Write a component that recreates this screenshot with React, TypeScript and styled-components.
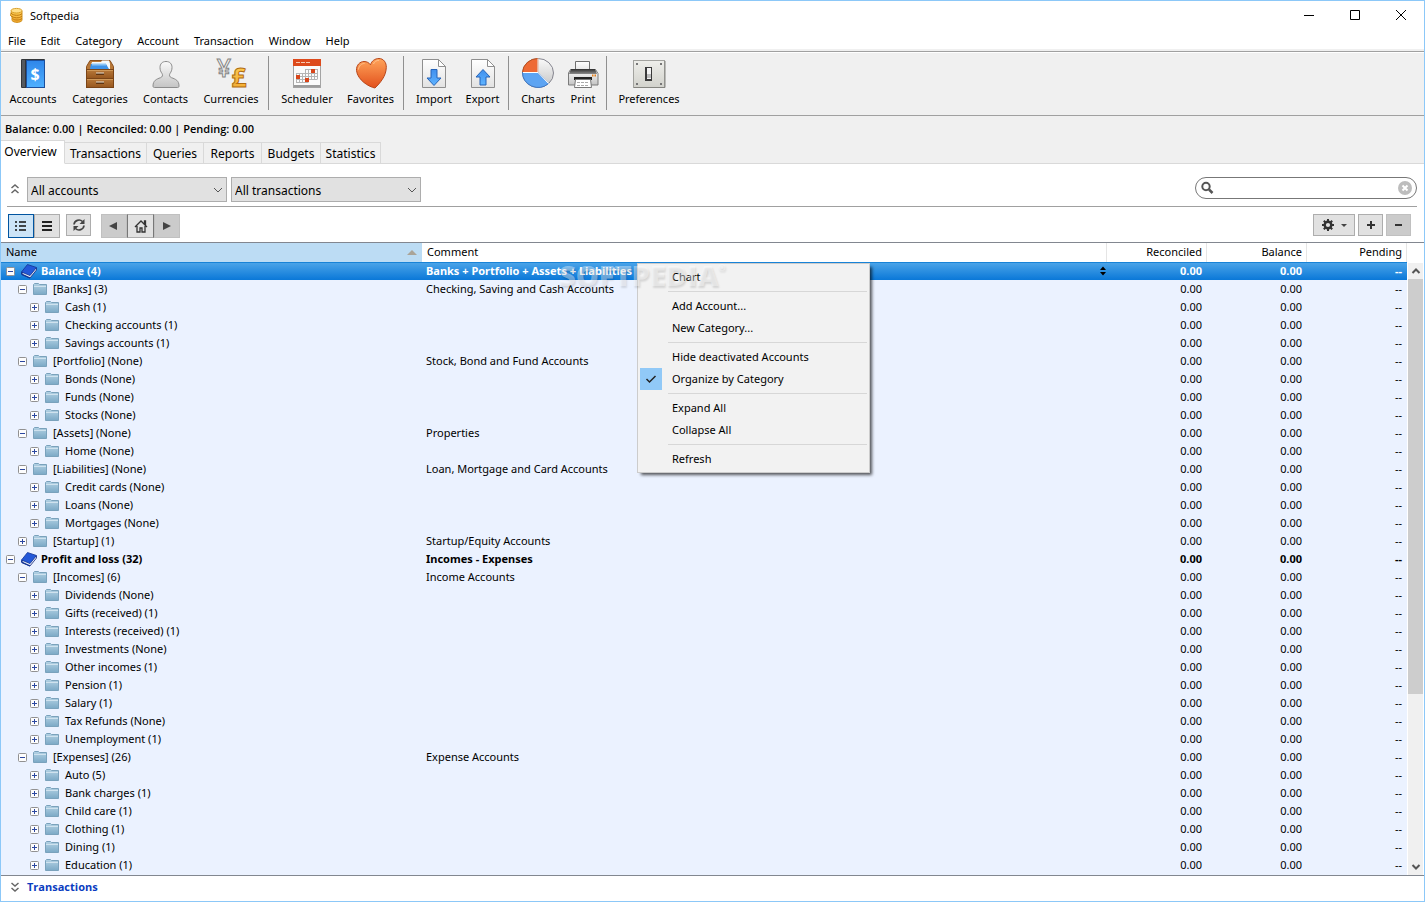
import React from 'react';
import styled, { createGlobalStyle, css } from 'styled-components';

const GlobalStyle = createGlobalStyle`
  * { box-sizing: border-box; }
  body { margin: 0; background: #fff; }
  body, button, input, select, table {
    font-family: "Noto Sans", "Open Sans", sans-serif;
    font-size: 11px;
    color: #000;
  }
  button { border: 0; padding: 0; margin: 0; background: none; }
  svg { display: block; flex: none; overflow: visible; }
`;

const Window = styled.div`
  display: flex;
  flex-direction: column;
  min-height: 100vh;
  border: 1px solid #8cc8f8;
  background: #fff;
`;

const TitleBar = styled.header`
  display: flex;
  align-items: center;
  height: 29px;
  padding: 0 13px 1px 7px;
  gap: 5px;
`;

const Title = styled.h1`
  flex: 1;
  margin: 0;
  font-size: 11px;
  font-weight: 400;
`;

const CaptionButtons = styled.div`
  display: flex;
  gap: 26px;
`;

const CaptionButton = styled.button`
  width: 20px;
  height: 20px;
  display: grid;
  place-items: center;
`;

const MenuBar = styled.nav`
  display: flex;
  gap: 15px;
  height: 21px;
  padding-left: 7px;
  border-bottom: 2px solid #f0f0f0;
`;

const MenuBarItem = styled.button`
  height: 20px;
  line-height: 22px;
`;

const ToolBar = styled.div`
  display: flex;
  height: 65px;
  padding-top: 4px;
  background: #f0f0f0;
  border-top: 1px solid #a0a0a0;
  border-bottom: 1px solid #a0a0a0;
  box-shadow: inset 0 1px #fff;
`;

const ToolGroup = styled.div`
  display: flex;
  padding-right: 2px;

  & + & {
    padding-left: 5px;
    border-left: 1px solid #909090;
    height: 54px;
  }
`;

const ToolButton = styled.button<{ $w: number }>`
  display: flex;
  flex-direction: column;
  align-items: center;
  gap: 2px;
  width: ${p => p.$w}px;
  height: 52px;
  padding-top: 1px;
  line-height: 16px;
`;

const StatusLine = styled.div`
  height: 24px;
  padding-left: 4px;
  line-height: 25px;
  font-family: "Open Sans", "Noto Sans", sans-serif;
  font-weight: 600;
  background: #f0f0f0;
`;

const TabStrip = styled.div`
  display: flex;
  align-items: flex-end;
  height: 24px;
  background: #f0f0f0;
  box-shadow: inset 0 -1px #d9d9d9;
`;

const Tab = styled.button<{ $w: number; $active?: boolean }>`
  width: ${p => p.$w}px;
  height: 22px;
  font-size: 12px;
  line-height: 22px;
  white-space: nowrap;
  border: 1px solid #d9d9d9;
  border-left: 0;
  ${p => p.$active && css`
    height: 24px;
    padding: 0 4px 2px 0;
    background: #fff;
    border-bottom-color: #fff;
  `}
`;

const FilterRow = styled.div`
  display: flex;
  align-items: flex-start;
  gap: 4px;
  margin: 0 7px 0 6px;
  padding: 13px 0 4px;
  border-bottom: 1px solid #a0a0a0;
`;

const CollapseButton = styled.button`
  width: 16px;
  height: 24px;
  display: grid;
  place-items: center;
`;

const SelectBox = styled.label<{ $w: number }>`
  display: grid;
  grid-template-columns: 1fr 13px;
  align-items: center;
  width: ${p => p.$w}px;
  height: 25px;
  background: #e1e1e1;
  border: 1px solid #adadad;
`;

const Select = styled.select`
  grid-area: 1 / 1 / 2 / 3;
  height: 23px;
  padding: 2px 3px 0;
  font-size: 12px;
  appearance: none;
  background: transparent;
  border: 0;
`;

const SelectArrow = styled.span`
  grid-area: 1 / 2;
  pointer-events: none;
`;

const SearchBox = styled.label`
  display: flex;
  align-items: center;
  gap: 4px;
  width: 222px;
  height: 22px;
  margin-left: auto;
  padding: 0 4px 0 5px;
  border: 1px solid #777;
  border-radius: 11px;
`;

const SearchInput = styled.input`
  flex: 1;
  min-width: 0;
  height: 18px;
  padding: 0;
  border: 0;
  outline: 0;
  background: transparent;
`;

const ActionRow = styled.div`
  display: flex;
  align-items: flex-start;
  padding: 7px 13px 4px 7px;
  gap: 6px;
  border-bottom: 1px solid #828790;
`;

const ButtonGroup = styled.div<{ $gap?: number; $side?: 'start' | 'end' }>`
  display: flex;
  gap: ${p => p.$gap || 0}px;
  margin-left: ${p => (p.$side === 'end' ? 'auto' : p.$side === 'start' ? '4px' : '0')};
`;

const IconButton = styled.button<{ $w?: number; $h?: number; $tone?: 'on' | 'off' | 'middle' }>`
  display: flex;
  align-items: center;
  justify-content: center;
  gap: 6px;
  width: ${p => p.$w || 26}px;
  height: ${p => p.$h || 24}px;
  background: #e1e1e1;
  border: 1px solid #adadad;
  ${p => p.$tone === 'on' && css`background: #cce4f7; border-color: #0054a0;`}
  ${p => p.$tone === 'off' && css`background: #cbcbcb; border-color: #c0c0c0;`}
  ${p => p.$tone === 'middle' && css`border-left-color: #777; border-right-color: #777;`}
`;

const ListArea = styled.main`
  position: relative;
  display: grid;
  grid-template-columns: 1fr 17px;
  flex: 1;
  background: #ebf2ff;
`;

const Table = styled.table`
  width: 100%;
  align-self: start;
  table-layout: fixed;
  border-collapse: collapse;
`;

const Col = styled.col<{ $w?: number }>`
  width: ${p => (p.$w ? `${p.$w}px` : 'auto')};
`;

const HeadCell = styled.th<{ $sorted?: boolean; $right?: boolean }>`
  height: 19px;
  padding: 0 5px 1px;
  line-height: 18px;
  font-weight: 400;
  text-align: ${p => (p.$right ? 'right' : 'left')};
  background: ${p => (p.$sorted ? '#bcdcf4' : '#fff')};
  box-shadow: inset -1px 0 ${p => (p.$sorted ? '#bcdcf4' : '#e5e5e5')};
`;

const HeadLine = styled.span`
  display: flex;
  align-items: center;
  justify-content: space-between;
  height: 18px;
`;

const Row = styled.tr<{ $bold?: boolean; $selected?: boolean }>`
  height: 18px;
  font-weight: ${p => (p.$bold ? 700 : 400)};
  ${p => p.$selected && css`
    background: linear-gradient(#1883d7 1px, #4aa3e8 1px, #0a78d8);
    td { color: #fff; }
  `}
`;

const Cell = styled.td<{ $right?: boolean }>`
  height: 18px;
  padding: 0 5px 0 4px;
  line-height: 18px;
  white-space: nowrap;
  text-align: ${p => (p.$right ? 'right' : 'left')};
`;

const NameLine = styled.div<{ $level: number }>`
  display: flex;
  align-items: center;
  height: 18px;
  padding-left: ${p => 1 + p.$level * 12}px;
`;

const Expander = styled.button`
  width: 9px;
  height: 9px;
  margin-right: 6px;
`;

const NameText = styled.span`
  margin-left: 4px;
`;

const CommentLine = styled.div`
  display: flex;
  align-items: center;
  justify-content: space-between;
  height: 18px;
  margin-right: -4px;
`;

const ScrollColumn = styled.div`
  display: flex;
  flex-direction: column;
  padding: 0 1px;
  background: #fff;
`;

const ScrollHead = styled.div`
  height: 20px;
`;

const ScrollArrow = styled.button`
  display: grid;
  place-items: center;
  height: 16px;
  background: #f0f0f0;
`;

const ScrollTrack = styled.div`
  display: grid;
  grid-template-rows: 415fr 165fr;
  flex: 1;
  background: #f0f0f0;
`;

const ScrollThumb = styled.div`
  background: #cdcdcd;
`;

const ContextMenu = styled.div`
  position: absolute;
  top: 20px;
  left: 636px;
  width: 233px;
  padding: 2px;
  background: #f2f2f2;
  border: 1px solid #ccc;
  box-shadow: 3px 3px 3px -1px rgba(0, 0, 0, 0.65);
`;

const ContextItem = styled.button`
  display: grid;
  grid-template-columns: 22px 1fr;
  gap: 10px;
  width: 100%;
  height: 22px;
  line-height: 22px;
  text-align: left;
`;

const CheckMark = styled.span`
  display: grid;
  place-items: center;
  width: 22px;
  height: 22px;
  background: #91c9f7;
`;

const ContextDivider = styled.hr`
  height: 1px;
  margin: 3px 0 3px 28px;
  border: 0;
  background: #d7d7d7;
`;

const Watermark = styled.span`
  position: absolute;
  top: 12px;
  left: 558px;
  font-family: "Open Sans", sans-serif;
  font-size: 29px;
  line-height: 40px;
  font-weight: 800;
  color: rgba(255, 255, 255, 0.4);
  text-shadow: 1px 2px 2px rgba(0, 0, 0, 0.12);
  pointer-events: none;

  sup { font-size: 9px; line-height: 9px; vertical-align: 15px; }
`;

const FooterBar = styled.footer`
  display: flex;
  align-items: center;
  gap: 4px;
  height: 26px;
  padding: 0 6px 4px;
  border-top: 1px solid #828790;
`;

const FooterLink = styled.a`
  font-family: "Open Sans", "Noto Sans", sans-serif;
  font-weight: 700;
  color: #0a3cc0;
  text-decoration: none;
`;

/* ---------- drawings ---------- */

const Icon32 = ({ children }: { children: React.ReactNode }) => (
  <svg width="32" height="32" viewBox="0 0 32 32" aria-hidden="true">{children}</svg>
);

const Gradients = () => (
  <svg width="0" height="0" aria-hidden="true">
    <defs>
      <linearGradient id="blue" x1="0" y1="0" x2="0" y2="1"><stop offset="0" stopColor="#2f86ea" /><stop offset="1" stopColor="#4fb0ff" /></linearGradient>
      <linearGradient id="arrow" x1="0" y1="0" x2="0" y2="1"><stop offset="0" stopColor="#3f8fee" /><stop offset="1" stopColor="#5fb4ff" /></linearGradient>
      <linearGradient id="wood" x1="0" y1="0" x2="0" y2="1"><stop offset="0" stopColor="#b97a3a" /><stop offset="1" stopColor="#96561e" /></linearGradient>
      <linearGradient id="silver" x1="0" y1="0" x2="0" y2="1"><stop offset="0" stopColor="#fafafa" /><stop offset="1" stopColor="#c4c4c4" /></linearGradient>
      <linearGradient id="plate" x1="0" y1="0" x2="0" y2="1"><stop offset="0" stopColor="#eeeeea" /><stop offset="1" stopColor="#d2d2cc" /></linearGradient>
      <linearGradient id="paper" x1="0" y1="0" x2="0" y2="1"><stop offset="0" stopColor="#ffffff" /><stop offset="1" stopColor="#e2e2e2" /></linearGradient>
      <linearGradient id="orange" x1="0" y1="0" x2="0" y2="1"><stop offset="0" stopColor="#ffa45a" /><stop offset="1" stopColor="#e2501c" /></linearGradient>
      <linearGradient id="gold" x1="0" y1="0" x2="0" y2="1"><stop offset="0" stopColor="#ffd35a" /><stop offset="1" stopColor="#f0a42c" /></linearGradient>
      <linearGradient id="folder" x1="0" y1="0" x2="0" y2="1"><stop offset="0" stopColor="#b4d2e4" /><stop offset="1" stopColor="#7ba9c6" /></linearGradient>
      <linearGradient id="dark" x1="0" y1="0" x2="0" y2="1"><stop offset="0" stopColor="#2e2e2e" /><stop offset="1" stopColor="#8a8a8a" /></linearGradient>
    </defs>
  </svg>
);

const AccountsIcon = () => (
  <Icon32>
    <rect x="4" y="2" width="24" height="29" rx="1" fill="#33363a" />
    <rect x="5" y="3" width="3" height="27" fill="#55595f" />
    <rect x="9.500" y="3.500" width="18" height="27" fill="url(#blue)" stroke="#1c4f9c" />
    <text x="18" y="23" textAnchor="middle" fontSize="16" fontWeight="700" fill="#fff">$</text>
  </Icon32>
);

const CategoriesIcon = () => (
  <Icon32>
    <path d="M6 3.500h20l3.500 6v3h-27v-3z" fill="#b87838" stroke="#8a4f1c" />
    <path d="M7 8l1-3h9l1-1.500h7l1 3V12H7z" fill="#f6f8fa" />
    <path d="M7 7h15l3 5H6z" fill="#3f92e8" />
    <path d="M8 7.500h14" stroke="#8cc4f6" strokeWidth="2" />
    <rect x="2.500" y="12.500" width="27" height="9" fill="url(#wood)" stroke="#7a4416" />
    <rect x="2.500" y="21.500" width="27" height="9" fill="url(#wood)" stroke="#7a4416" />
    <path d="M3 13.500h26M3 22.500h26" stroke="#cf9858" />
    <path d="M12 17h8M12 26h8" stroke="#5f3410" strokeWidth="2" />
    <path d="M12 16h8M12 25h8" stroke="#e8e0d4" />
  </Icon32>
);

const ContactsIcon = () => (
  <Icon32>
    <path d="M16 4.500c-4 0-6 2.500-6 6 0 2.500.8 4.300 2 6 1 1.600.6 3.400-1.500 4.200-4 1.400-7.500 2.800-7.500 8.300 0 1 .5 1.500 1.500 1.500h23c1 0 1.500-.5 1.500-1.500 0-5.500-3.500-6.900-7.500-8.300-2.100-.8-2.500-2.600-1.500-4.200 1.200-1.700 2-3.500 2-6 0-3.500-2-6-6-6z" fill="url(#silver)" stroke="#8c8c8c" />
  </Icon32>
);

const CurrenciesIcon = () => (
  <Icon32>
    <text x="9" y="20" textAnchor="middle" fontSize="25" fontWeight="500" fill="#f4f4f4" stroke="#858585" strokeWidth="1">¥</text>
    <text x="24" y="30" textAnchor="middle" fontSize="26" fontWeight="700" fill="url(#gold)" stroke="#b06c10" strokeWidth="1">£</text>
  </Icon32>
);

const SchedulerIcon = () => (
  <Icon32>
    <rect x="2.500" y="2.500" width="27" height="28" fill="#fbfbfb" stroke="#a4a4a4" />
    <rect x="2" y="2" width="28" height="7" fill="#dd4a1c" />
    <path d="M5 5.500h14" stroke="#f8c8b0" strokeDasharray="4 1" />
    <path d="M3 29h26" stroke="#9c9c9c" strokeWidth="2" />
    <path d="M14 12.500h12.500M5 16.500h21.500M5 19.500h21.500M5 22.500h21.500M5 25.500h12.500M5.500 16v9M8.500 16v9M11.500 16v9M14.500 12v13M17.500 12v13M20.500 12v10M23.500 12v10M26.500 12v10" stroke="#b4b4b4" />
    <path d="M5 18h4v4H5zM20 12h4v4h-4zM14 21h4v4h-4z" fill="#d8451a" />
  </Icon32>
);

const FavoritesIcon = () => (
  <Icon32>
    <path d="M20 31C14 30 2.500 23 1.500 13.500 1.200 8 5 4.500 9 4.500c3 0 5 1.300 6.500 3.300C16.500 4 20 1.500 24 1.500c4.500 0 7.500 4 7.300 9C31 19.500 25 26 20 31z" fill="url(#orange)" stroke="#b8461a" />
    <path d="M3.500 12.500c.3-4 3-6 6-6M18.500 7c1-2.500 3-3.700 5.500-3.700" fill="none" stroke="#ffc08a" />
  </Icon32>
);

const PageIcon = ({ up }: { up?: boolean }) => (
  <Icon32>
    <path d="M4.500 2.500h16l7 7v21h-23z" fill="url(#paper)" stroke="#8f8f8f" />
    <path d="M20.500 2.500v7h7z" fill="#fff" stroke="#8f8f8f" />
    <path d={up ? 'M16 12.500l7 7.500h-4v8h-6v-8H9z' : 'M16 28.500L9 21h4v-8.500h6V21h4z'} fill="url(#arrow)" stroke="#2563b8" />
  </Icon32>
);

const ChartsIcon = () => (
  <Icon32>
    <ellipse cx="16" cy="16" rx="15.500" ry="14.500" fill="url(#silver)" stroke="#85858f" />
    <path d="M16 15.500V1.500A15.500 14.500 0 0 0 .5 15.500z" fill="#ee6a34" stroke="#b8501f" />
    <path d="M16 15.500H.5A15.500 14.500 0 0 0 26.500 26.500z" fill="#5da4f2" stroke="#3f78c4" />
    <path d="M16 15.500l10.500 11M16 15.500v-14M16 15.500H1" stroke="#fff" />
  </Icon32>
);

const PrintIcon = () => (
  <Icon32>
    <path d="M8.500 4.500h14v10h-14z" fill="url(#paper)" stroke="#6f6f6f" />
    <path d="M3.500 12.500h25l2.500 4v11.500H1.500V16z" fill="url(#silver)" stroke="#7b7b7b" />
    <path d="M4 12h24l2 5H2z" fill="url(#dark)" />
    <path d="M7 20h18v3H7z" fill="#222" />
    <path d="M8.500 22.500h15l1 8h-17z" fill="#fff" stroke="#777" />
    <path d="M10 25.500h12M10 28.500h12" stroke="#aaa" strokeDasharray="3 1" />
    <path d="M25 18.500h4" stroke="#e88018" strokeWidth="2" strokeDasharray="1.500 1" />
  </Icon32>
);

const PreferencesIcon = () => (
  <Icon32>
    <rect x=".5" y="3.500" width="31" height="27" fill="url(#plate)" stroke="#a2a29e" />
    <path d="M1 30.500h31V4" fill="none" stroke="#858580" />
    <rect x="12" y="10" width="7" height="14" fill="#3a3a3a" />
    <rect x="14" y="11" width="4" height="11" fill="#f4f4f4" />
    <path d="M14 17h4v4h-4z" fill="#bcbcbc" />
    <path d="M3 6h2v2H3zM27 6h2v2h-2zM3 26h2v2H3zM27 26h2v2h-2z" fill="#777" />
  </Icon32>
);

const CoinsIcon = () => (
  <svg width="17" height="17" viewBox="0 0 17 17" aria-hidden="true">
    <path d="M3.500 3.500l-1 5L4 10v3.500c2 2.500 8 2.500 10 0V4z" fill="url(#gold)" stroke="#d0901c" />
    <path d="M3 6c2 3 9 3 11 .5M3 8.500c2 3 9 3 11 .5M4.500 11.500c2 2 7 2 9.500 0" fill="none" stroke="#c07c10" />
    <ellipse cx="8.500" cy="3.700" rx="5.500" ry="2.300" fill="#ffe08a" stroke="#d9a02a" />
  </svg>
);

const BookIcon = () => (
  <svg width="16" height="16" viewBox="0 0 16 16" aria-hidden="true">
    <path d="M1 9.500v2l8 3.500 6.500-8V5z" fill="#e4e8f0" stroke="#14267a" strokeWidth=".8" />
    <path d="M6.500 1.500l9 3-6.500 8-8.500-3.500z" fill="#2358d8" stroke="#123494" strokeWidth=".8" />
    <path d="M.8 9.300c-.6 1 0 2 .7 2.300L9 15" fill="none" stroke="#123494" strokeWidth="1.200" />
  </svg>
);

const FolderIcon = () => (
  <svg width="16" height="16" viewBox="0 0 16 16" aria-hidden="true">
    <path d="M.5 13.500v-10l1-1h4l1 1h7v10z" fill="url(#folder)" stroke="#7aa2bc" />
    <path d="M1 5.500h12" stroke="#cfe2ee" />
  </svg>
);

const BoxSign = ({ plus }: { plus: boolean }) => (
  <svg width="9" height="9" viewBox="0 0 9 9" aria-hidden="true">
    <rect x=".5" y=".5" width="8" height="8" rx="1" fill="#fdfdfd" stroke="#919191" />
    <path d={plus ? 'M2 4.500h5M4.500 2v5' : 'M2 4.500h5'} stroke="#2b47a0" />
  </svg>
);

const DoubleChevron = ({ down }: { down?: boolean }) => (
  <svg width="8" height="12" viewBox="0 0 8 12" fill="none" stroke="#666" strokeWidth="1.500" aria-hidden="true">
    <path d={down ? 'M.5 2L4 5l3.500-3M.5 7L4 10l3.500-3' : 'M.5 5L4 2l3.500 3M.5 10L4 7l3.500 3'} />
  </svg>
);

const Chevron = ({ up, bold }: { up?: boolean; bold?: boolean }) => (
  <svg width="10" height="8" viewBox="0 0 10 8" fill="none" stroke="#555" strokeWidth={bold ? 2 : 1} aria-hidden="true">
    <path d={bold ? (up ? 'M1.500 6L5 2.500 8.500 6' : 'M1.500 2L5 5.500 8.500 2') : 'M1 2l4 4 4-4'} />
  </svg>
);

const Glyph = ({ size = 14, children }: { size?: number; children: React.ReactNode }) => (
  <svg width={size} height="14" viewBox={`0 0 ${size} 14`} aria-hidden="true">{children}</svg>
);

/* ---------- data ---------- */

const menus = ['File', 'Edit', 'Category', 'Account', 'Transaction', 'Window', 'Help'];

type Tool = { label: string; w: number; icon: React.ReactNode };
const toolGroups: Tool[][] = [
  [
    { label: 'Accounts', w: 64, icon: <AccountsIcon /> },
    { label: 'Categories', w: 70, icon: <CategoriesIcon /> },
    { label: 'Contacts', w: 61, icon: <ContactsIcon /> },
    { label: 'Currencies', w: 70, icon: <CurrenciesIcon /> },
  ],
  [
    { label: 'Scheduler', w: 66, icon: <SchedulerIcon /> },
    { label: 'Favorites', w: 61, icon: <FavoritesIcon /> },
  ],
  [
    { label: 'Import', w: 50, icon: <PageIcon /> },
    { label: 'Export', w: 47, icon: <PageIcon up /> },
  ],
  [
    { label: 'Charts', w: 48, icon: <ChartsIcon /> },
    { label: 'Print', w: 42, icon: <PrintIcon /> },
  ],
  [{ label: 'Preferences', w: 74, icon: <PreferencesIcon /> }],
];

const tabs: [string, number][] = [
  ['Overview', 64], ['Transactions', 82], ['Queries', 57], ['Reports', 58], ['Budgets', 59], ['Statistics', 60],
];

type Account = { level: number; name: string; comment?: string; closed?: boolean };
const leaves = (...names: string[]): Account[] => names.map(name => ({ level: 2, name, closed: true }));
const accounts: Account[] = [
  { level: 0, name: 'Balance (4)', comment: 'Banks + Portfolio + Assets + Liabilities' },
  { level: 1, name: '[Banks] (3)', comment: 'Checking, Saving and Cash Accounts' },
  ...leaves('Cash (1)', 'Checking accounts (1)', 'Savings accounts (1)'),
  { level: 1, name: '[Portfolio] (None)', comment: 'Stock, Bond and Fund Accounts' },
  ...leaves('Bonds (None)', 'Funds (None)', 'Stocks (None)'),
  { level: 1, name: '[Assets] (None)', comment: 'Properties' },
  ...leaves('Home (None)'),
  { level: 1, name: '[Liabilities] (None)', comment: 'Loan, Mortgage and Card Accounts' },
  ...leaves('Credit cards (None)', 'Loans (None)', 'Mortgages (None)'),
  { level: 1, name: '[Startup] (1)', comment: 'Startup/Equity Accounts', closed: true },
  { level: 0, name: 'Profit and loss (32)', comment: 'Incomes - Expenses' },
  { level: 1, name: '[Incomes] (6)', comment: 'Income Accounts' },
  ...leaves('Dividends (None)', 'Gifts (received) (1)', 'Interests (received) (1)', 'Investments (None)',
    'Other incomes (1)', 'Pension (1)', 'Salary (1)', 'Tax Refunds (None)', 'Unemployment (1)'),
  { level: 1, name: '[Expenses] (26)', comment: 'Expense Accounts' },
  ...leaves('Auto (5)', 'Bank charges (1)', 'Child care (1)', 'Clothing (1)', 'Dining (1)', 'Education (1)'),
];

const contextGroups = [
  ['Chart'],
  ['Add Account...', 'New Category...'],
  ['Hide deactivated Accounts', 'Organize by Category'],
  ['Expand All', 'Collapse All'],
  ['Refresh'],
];

/* ---------- page ---------- */

const AccountRow = ({ account, selected }: { account: Account; selected: boolean }) => (
  <Row $bold={account.level === 0} $selected={selected}>
    <Cell>
      <NameLine $level={account.level}>
        <Expander aria-label={account.closed ? 'Expand' : 'Collapse'}><BoxSign plus={!!account.closed} /></Expander>
        {account.level === 0 ? <BookIcon /> : <FolderIcon />}
        <NameText>{account.name}</NameText>
      </NameLine>
    </Cell>
    <Cell>
      <CommentLine>
        <span>{account.comment}</span>
        {selected && (
          <svg width="6" height="10" viewBox="0 0 6 10" aria-hidden="true"><path d="M0 4l3-3.500L6 4zM0 6l3 3.500L6 6z" fill="#000" /></svg>
        )}
      </CommentLine>
    </Cell>
    <Cell $right>0.00</Cell>
    <Cell $right>0.00</Cell>
    <Cell $right>--</Cell>
  </Row>
);

export default function App() {
  return (
    <Window>
      <GlobalStyle />
      <TitleBar>
        <CoinsIcon />
        <Title>Softpedia</Title>
        <CaptionButtons>
          <CaptionButton aria-label="Minimize"><svg width="10" height="10" viewBox="0 0 10 10"><path d="M0 5.500h10" stroke="#000" /></svg></CaptionButton>
          <CaptionButton aria-label="Maximize"><svg width="10" height="10" viewBox="0 0 10 10"><path d="M.5.5h9v9h-9z" fill="none" stroke="#000" /></svg></CaptionButton>
          <CaptionButton aria-label="Close"><svg width="10" height="10" viewBox="0 0 10 10"><path d="M0 0l10 10M10 0L0 10" stroke="#000" /></svg></CaptionButton>
        </CaptionButtons>
      </TitleBar>
      <MenuBar>{menus.map(m => <MenuBarItem key={m}>{m}</MenuBarItem>)}</MenuBar>

      <ToolBar>
        {toolGroups.map((group, i) => (
          <ToolGroup key={i}>
            {group.map(t => <ToolButton key={t.label} $w={t.w}>{t.icon}{t.label}</ToolButton>)}
          </ToolGroup>
        ))}
      </ToolBar>
      <StatusLine>Balance: 0.00 | Reconciled: 0.00 | Pending: 0.00</StatusLine>
      <TabStrip role="tablist">
        {tabs.map(([label, w], i) => (
          <Tab key={label} role="tab" aria-selected={i === 0} $w={w} $active={i === 0}>{label}</Tab>
        ))}
      </TabStrip>

      <FilterRow>
        <CollapseButton aria-label="Collapse filters"><DoubleChevron /></CollapseButton>
        <SelectBox $w={200}>
          <Select aria-label="Accounts filter"><option>All accounts</option></Select>
          <SelectArrow><Chevron /></SelectArrow>
        </SelectBox>
        <SelectBox $w={190}>
          <Select aria-label="Transactions filter"><option>All transactions</option></Select>
          <SelectArrow><Chevron /></SelectArrow>
        </SelectBox>
        <SearchBox>
          <Glyph><circle cx="5" cy="5.500" r="3.700" fill="none" stroke="#555" strokeWidth="2" /><path d="M8 8.500l3.500 3.500" stroke="#555" strokeWidth="2.500" /></Glyph>
          <SearchInput aria-label="Search" />
          <Glyph><circle cx="7" cy="7" r="7" fill="#bdbdbd" /><path d="M4.500 4.500l5 5M9.500 4.500l-5 5" stroke="#fff" strokeWidth="2" /></Glyph>
        </SearchBox>
      </FilterRow>

      <ActionRow>
        <ButtonGroup>
          <IconButton $tone="on" aria-label="Tree view"><Glyph><path d="M1 3h2M1 7h2M1 11h2M5 3h7M5 7h7M5 11h7" stroke="#111" strokeWidth="1.500" /></Glyph></IconButton>
          <IconButton aria-label="List view"><Glyph><path d="M2 3h10M2 7h10M2 11h10" stroke="#222" strokeWidth="2" /></Glyph></IconButton>
        </ButtonGroup>
        <IconButton $w={25} $h={22} aria-label="Refresh">
          <Glyph><path d="M2 6.500a5 5 0 0 1 8.500-3M12 7.500a5 5 0 0 1-8.500 3" fill="none" stroke="#444" strokeWidth="1.700" /><path d="M12.500 1v5H7.500zM1.500 13V8h5z" fill="#444" /></Glyph>
        </IconButton>
        <ButtonGroup $side="start">
          <IconButton $tone="off" aria-label="Back"><Glyph><path d="M10 3v8L2 7z" fill="#444" /></Glyph></IconButton>
          <IconButton $w={27} $tone="middle" aria-label="Home"><Glyph><path d="M1 8l6-6 6 6M3 7v6h3V9h2v4h3V7M10.500 5V2h1v4" fill="none" stroke="#333" strokeWidth="1.300" /></Glyph></IconButton>
          <IconButton $tone="off" aria-label="Forward"><Glyph><path d="M3 3v8l8-4z" fill="#444" /></Glyph></IconButton>
        </ButtonGroup>
        <ButtonGroup $gap={3} $side="end">
          <IconButton $w={42} $h={22} aria-label="Settings">
            <Glyph><circle cx="7" cy="7" r="3.300" fill="none" stroke="#333" strokeWidth="2.400" /><path d="M7 1v2.500M7 10.500V13M1 7h2.500M10.500 7H13M2.800 2.800l1.700 1.700M9.500 9.500l1.700 1.700M11.200 2.800L9.500 4.500M4.500 9.500l-1.700 1.700" stroke="#333" strokeWidth="2" /></Glyph>
            <svg width="6" height="4" viewBox="0 0 6 4" aria-hidden="true"><path d="M0 1h6L3 4z" fill="#444" /></svg>
          </IconButton>
          <IconButton $w={25} $h={22} aria-label="Add"><Glyph><path d="M3 7h8M7 3v8" stroke="#333" strokeWidth="2" /></Glyph></IconButton>
          <IconButton $w={25} $h={22} $tone="off" aria-label="Remove"><Glyph><path d="M3 7h7" stroke="#333" strokeWidth="2" /></Glyph></IconButton>
        </ButtonGroup>
      </ActionRow>

      <ListArea>
        <Table>
          <colgroup><Col $w={421} /><Col /><Col $w={100} /><Col $w={100} /><Col $w={100} /></colgroup>
          <thead>
            <tr>
              <HeadCell $sorted><HeadLine>Name<svg width="10" height="5" viewBox="0 0 10 5" aria-hidden="true"><path d="M0 5l5-5 5 5z" fill="#aaa498" /></svg></HeadLine></HeadCell>
              <HeadCell>Comment</HeadCell>
              <HeadCell $right>Reconciled</HeadCell>
              <HeadCell $right>Balance</HeadCell>
              <HeadCell $right>Pending</HeadCell>
            </tr>
          </thead>
          <tbody>
            {accounts.map((a, i) => <AccountRow key={a.name} account={a} selected={i === 0} />)}
          </tbody>
        </Table>
        <ScrollColumn>
          <ScrollHead />
          <ScrollArrow aria-label="Scroll up"><Chevron up bold /></ScrollArrow>
          <ScrollTrack><ScrollThumb /></ScrollTrack>
          <ScrollArrow aria-label="Scroll down"><Chevron bold /></ScrollArrow>
        </ScrollColumn>
        <ContextMenu role="menu">
          {contextGroups.map((group, i) => (
            <React.Fragment key={i}>
              {i > 0 && <ContextDivider />}
              {group.map(label => (
                <ContextItem key={label} role="menuitem">
                  {label === 'Organize by Category'
                    ? <CheckMark><Glyph><path d="M2.500 7l3 3 6-6" fill="none" stroke="#222" strokeWidth="1.500" /></Glyph></CheckMark>
                    : <span />}
                  <span>{label}</span>
                </ContextItem>
              ))}
            </React.Fragment>
          ))}
        </ContextMenu>
        <Watermark>SOFTPEDIA<sup>®</sup></Watermark>
      </ListArea>

      <FooterBar>
        <CollapseButton aria-label="Show transactions"><DoubleChevron down /></CollapseButton>
        <FooterLink href="#transactions">Transactions</FooterLink>
      </FooterBar>
      <Gradients />
    </Window>
  );
}
